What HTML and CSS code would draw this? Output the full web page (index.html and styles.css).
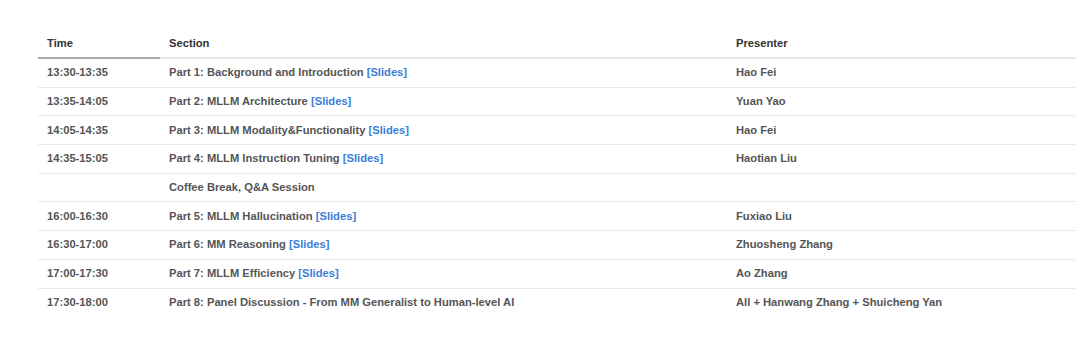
FILE: index.html
```html
<!DOCTYPE html>
<html>
<head>
<meta charset="utf-8">
<link rel="stylesheet" href="styles.css">
</head>
<body>
<div class="wrap">
<table class="schedule">
  <thead>
    <tr>
      <th class="c-time">Time</th>
      <th class="c-section">Section</th>
      <th class="c-presenter">Presenter</th>
    </tr>
  </thead>
  <tbody>
    <tr><td>13:30-13:35</td><td>Part 1: Background and Introduction <a href="#">[Slides]</a></td><td>Hao Fei</td></tr>
    <tr><td>13:35-14:05</td><td>Part 2: MLLM Architecture <a href="#">[Slides]</a></td><td>Yuan Yao</td></tr>
    <tr><td>14:05-14:35</td><td>Part 3: MLLM Modality&amp;Functionality <a href="#">[Slides]</a></td><td>Hao Fei</td></tr>
    <tr><td>14:35-15:05</td><td>Part 4: MLLM Instruction Tuning <a href="#">[Slides]</a></td><td>Haotian Liu</td></tr>
    <tr><td></td><td>Coffee Break, Q&amp;A Session</td><td></td></tr>
    <tr><td>16:00-16:30</td><td>Part 5: MLLM Hallucination <a href="#">[Slides]</a></td><td>Fuxiao Liu</td></tr>
    <tr><td>16:30-17:00</td><td>Part 6: MM Reasoning <a href="#">[Slides]</a></td><td>Zhuosheng Zhang</td></tr>
    <tr><td>17:00-17:30</td><td>Part 7: MLLM Efficiency <a href="#">[Slides]</a></td><td>Ao Zhang</td></tr>
    <tr><td>17:30-18:00</td><td>Part 8: Panel Discussion - From MM Generalist to Human-level AI</td><td>All + Hanwang Zhang + Shuicheng Yan</td></tr>
  </tbody>
</table>
</div>
</body>
</html>
```
FILE: styles.css
```css
html, body {
  margin: 0;
  padding: 0;
  background: #fff;
}
.wrap {
  padding: 29px 4px 0 38px;
}
.schedule {
  width: 1038px;
  border-collapse: collapse;
  font-family: "Liberation Sans", Arial, sans-serif;
  font-size: 11.2px;
  font-weight: bold;
  color: #555;
  table-layout: fixed;
}
.schedule th {
  text-align: left;
  color: #333;
  padding: 7px 9px 7px 9px;
  line-height: 13px;
  height: 14px;
  border-bottom: 2px solid #e6e6e6;
}
.schedule th.c-time {
  width: 104px;
  border-bottom-color: #a9a9a9;
}
.schedule th.c-section {
  width: 549px;
}
.schedule td {
  padding: 0 9px;
  height: 27.7px;
  line-height: 13px;
  border-bottom: 1px solid #e9e9e9;
  white-space: nowrap;
}
.schedule tbody tr:last-child td {
  border-bottom: none;
}
.schedule a {
  color: #3b7dd8;
  text-decoration: none;
}
```
